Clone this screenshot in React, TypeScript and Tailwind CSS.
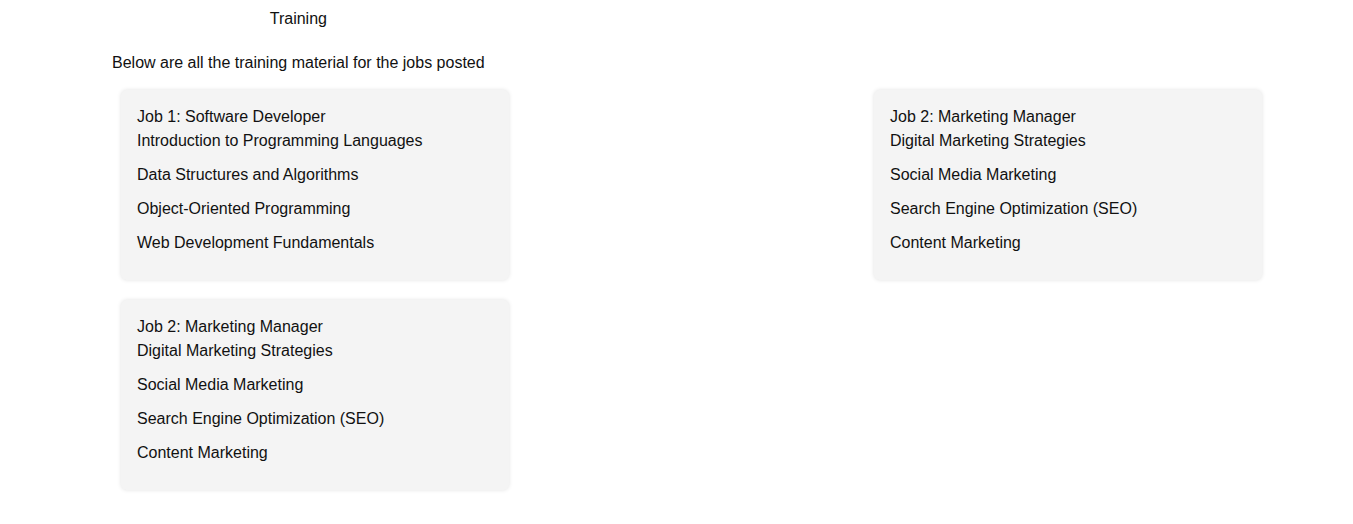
const jobs = [
  {
    title: "Job 1: Software Developer",
    items: [
      "Introduction to Programming Languages",
      "Data Structures and Algorithms",
      "Object-Oriented Programming",
      "Web Development Fundamentals",
    ],
  },
  {
    title: "Job 2: Marketing Manager",
    items: [
      "Digital Marketing Strategies",
      "Social Media Marketing",
      "Search Engine Optimization (SEO)",
      "Content Marketing",
    ],
  },
  {
    title: "Job 2: Marketing Manager",
    items: [
      "Digital Marketing Strategies",
      "Social Media Marketing",
      "Search Engine Optimization (SEO)",
      "Content Marketing",
    ],
  },
];

function JobCard({ title, items }: { title: string; items: string[] }) {
  return (
    <div className="w-[388px] rounded-md bg-[#f4f4f4] px-4 pt-[15px] pb-[15px] shadow-[0_0_4px_rgba(0,0,0,0.12)]">
      <div className="leading-6">{title}</div>
      <ul>
        {items.map((item, i) => (
          <li key={i} className="mb-[10px] leading-6">
            {item}
          </li>
        ))}
      </ul>
    </div>
  );
}

export default function App() {
  return (
    <div className="min-h-screen bg-white text-[16px] text-[#111] font-['Liberation_Sans',Arial,sans-serif]">
      <div className="pl-[112px] pt-[10px]">
        <div className="inline-block">
          <div className="text-center leading-[18px]">Training</div>
          <div className="mt-[26px] leading-[18px]">
            Below are all the training material for the jobs posted
          </div>
        </div>
      </div>

      {/* cards */}
      <div className="ml-[121px] mt-[15px] flex w-[1141px] flex-wrap justify-between gap-y-[20px]">
        {jobs.map((job, i) => (
          <JobCard key={i} title={job.title} items={job.items} />
        ))}
      </div>
    </div>
  );
}
